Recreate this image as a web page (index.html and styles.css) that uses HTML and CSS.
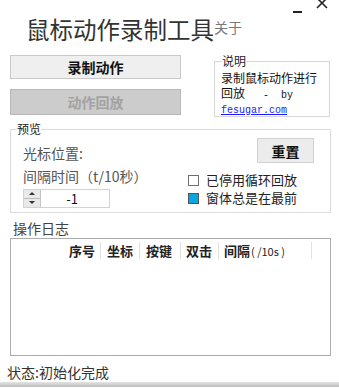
FILE: index.html
```html
<!DOCTYPE html>
<html lang="zh-CN">
<head>
  <meta charset="UTF-8" />
  <meta name="viewport" content="width=device-width, initial-scale=1" />
  <title>鼠标动作录制工具</title>
  <link rel="stylesheet" href="styles.css">
</head>
<body>

  <div class="window">
    <header class="titlebar">
      <h1 class="app-title">鼠标动作录制工具<span class="about">关于</span></h1>
      <div class="win-controls">
        <svg class="win-min" width="10" height="4" viewBox="0 0 10 4"><rect x="0" y="1" width="9" height="2" fill="#222"/></svg>
        <svg class="win-close" width="12" height="12" viewBox="0 0 12 12"><path d="M1 1 L11 11 M11 1 L1 11" stroke="#222" stroke-width="1.6"/></svg>
      </div>
    </header>

    <section class="top">
      <div class="actions">
        <button class="btn btn-record">录制动作</button>
        <button class="btn btn-replay" disabled>动作回放</button>
      </div>
      <fieldset class="info">
        <legend>说明</legend>
        <p>录制鼠标动作进行</p>
        <p>回放<span class="mono">   -  by</span></p>
        <p><a href="#">fesugar.com</a></p>
      </fieldset>
    </section>

    <fieldset class="preview">
      <legend>预览</legend>
      <div class="preview-body">
        <div class="preview-left">
          <div class="field-label">光标位置:</div>
          <div class="field-label second">间隔时间（t/10秒）</div>
          <div class="spinner">
            <span class="spin-arrows">
              <span class="spin-up"></span>
              <span class="spin-down"></span>
            </span>
            <span class="spin-value">-1</span>
          </div>
        </div>
        <div class="preview-right">
          <button class="btn btn-reset">重置</button>
          <label class="check first"><span class="box"></span>已停用循环回放</label>
          <label class="check"><span class="box checked"></span>窗体总是在最前</label>
        </div>
      </div>
    </fieldset>

    <div class="log-title">操作日志</div>
    <div class="log">
      <div class="log-head">
        <span class="col c1">序号</span>
        <span class="col c2">坐标</span>
        <span class="col c3">按键</span>
        <span class="col c4">双击</span>
        <span class="col c5">间隔<small>( /10s )</small></span>
      </div>
    </div>

    <div class="status">状态:初始化完成</div>
    <div class="bottom-bar"></div>
  </div>

</body>
</html>
```

FILE: styles.css
```css
body {
  margin: 0;
  background: #fff;
  font-family: "Noto Sans CJK SC", "Noto Sans", sans-serif;
  color: #333;
}
.window {
  width: 339px;
  height: 389px;
  overflow: hidden;
  display: flex;
  flex-direction: column;
}

/* title bar */
.titlebar {
  display: flex;
  justify-content: space-between;
  height: 44px;
  flex-shrink: 0;
}
.app-title {
  margin: 0;
  padding: 10px 0 0 26px;
  font-size: 23.5px;
  font-weight: normal;
  line-height: 34px;
  color: #333;
  white-space: nowrap;
}
.about {
  font-size: 14px;
  color: #777;
  vertical-align: 6px;
}
.win-controls {
  display: flex;
  align-items: flex-start;
  gap: 13px;
  padding-right: 11px;
}
.win-min {
  margin-top: 10px;
}
.win-close {
  margin-top: -3px;
}

/* top row */
.top {
  display: flex;
  justify-content: space-between;
  padding: 0 9px 0 10px;
  margin-top: 8px;
}
.actions {
  display: flex;
  flex-direction: column;
  width: 171px;
  padding-top: 3px;
}
.btn {
  font-family: inherit;
  font-size: 14px;
  font-weight: bold;
  padding: 0;
  cursor: pointer;
}
.btn-record {
  height: 24px;
  background: #efefef;
  border: 1px solid #c9c9c9;
  color: #111;
}
.btn-replay {
  height: 26px;
  margin-top: 10px;
  background: #cccccc;
  border: 1px solid #b8b8b8;
  color: #a2a2a2;
}

fieldset {
  margin: 0;
  min-width: 0;
}
legend {
  padding: 0;
  line-height: 16px;
  font-size: 12px;
  color: #222;
  background: #fff;
}
.info {
  width: 116px;
  box-sizing: border-box;
  margin-top: 1px;
  padding: 1px 0 1px 6px;
  border: 1px solid #d6d6d6;
  font-size: 12px;
  line-height: 15px;
  color: #111;
}
.info legend {
  margin-left: 1px;
}
.info p {
  margin: 0;
  height: 15px;
  white-space: pre;
}
.info .mono,
.info a {
  font-family: "Liberation Mono", monospace;
  font-size: 10px;
  line-height: 10px;
}
.info a {
  color: #1a1aff;
}

/* preview group */
.preview {
  margin: 4px 8px 0 10px;
  padding: 0 16px 4px 12px;
  border: 1px solid #dcdcdc;
}
.preview legend {
  margin-left: -6px;
}
.preview-body {
  display: flex;
  justify-content: space-between;
}
.preview-left {
  padding-top: 6px;
}
.field-label {
  font-size: 14px;
  line-height: 20px;
  color: #555;
}
.field-label.second {
  margin-top: 3px;
}
.spinner {
  display: flex;
  width: 87px;
  height: 19px;
  box-sizing: border-box;
  margin-top: 3px;
  border: 1px solid #c9dac9;
}
.spin-arrows {
  display: flex;
  flex-direction: column;
  width: 16px;
  background: #e9e9e9;
  border-right: 1px solid #c4c4c4;
}
.spin-up, .spin-down {
  flex: 1;
  position: relative;
}
.spin-up {
  border-bottom: 1px solid #bdbdbd;
}
.spin-up::after, .spin-down::after {
  content: "";
  position: absolute;
  left: 5px;
  top: 2px;
  border-left: 3px solid transparent;
  border-right: 3px solid transparent;
}
.spin-up::after {
  border-bottom: 3px solid #333;
}
.spin-down::after {
  border-top: 3px solid #333;
}
.spin-value {
  flex: 1;
  text-align: center;
  font-size: 13px;
  line-height: 17px;
  color: #111;
  padding-right: 6px;
}

.preview-right {
  display: flex;
  flex-direction: column;
  width: 126px;
  padding-top: 1px;
}
.btn-reset {
  align-self: flex-end;
  width: 57px;
  height: 25px;
  background: #ececec;
  border: 1px solid #d2d2d2;
  color: #111;
}
.check {
  display: flex;
  align-items: center;
  gap: 7px;
  font-size: 13px;
  line-height: 18px;
  color: #222;
}
.check.first {
  margin-top: 8px;
}
.box {
  width: 11px;
  height: 11px;
  box-sizing: border-box;
  border: 1px solid #6f6f6f;
  background: #fff;
}
.box.checked {
  background: #06a7de;
  border-color: #555;
}

/* log */
.log-title {
  margin: 5px 0 0 13px;
  font-size: 14px;
  line-height: 20px;
  color: #444;
}
.log {
  height: 118px;
  flex-shrink: 0;
  box-sizing: border-box;
  margin: 0 8px 0 10px;
  border: 1px solid #ababab;
}
.log-head {
  display: flex;
  align-items: center;
  height: 22px;
}
.col {
  box-sizing: border-box;
  height: 17px;
  line-height: 17px;
  padding-left: 6px;
  font-size: 13px;
  font-weight: bold;
  color: #222;
  border-right: 1px solid #e2e2e2;
  white-space: nowrap;
}
.c1 { width: 90px; text-align: right; padding: 0 5px 0 0; }
.c2 { width: 39px; }
.c3 { width: 41px; }
.c4 { width: 38px; padding-left: 5px; }
.c5 { width: 93px; padding-left: 5px; }
.col small {
  font-size: 11px;
  font-weight: normal;
  margin-left: 1px;
  white-space: pre;
}

.status {
  margin: 6px 0 0 7px;
  font-size: 14px;
  line-height: 20px;
  color: #333;
}
.bottom-bar {
  height: 5px;
  flex-shrink: 0;
  background: linear-gradient(#e4e4e4, #bdbdbd);
}
```
